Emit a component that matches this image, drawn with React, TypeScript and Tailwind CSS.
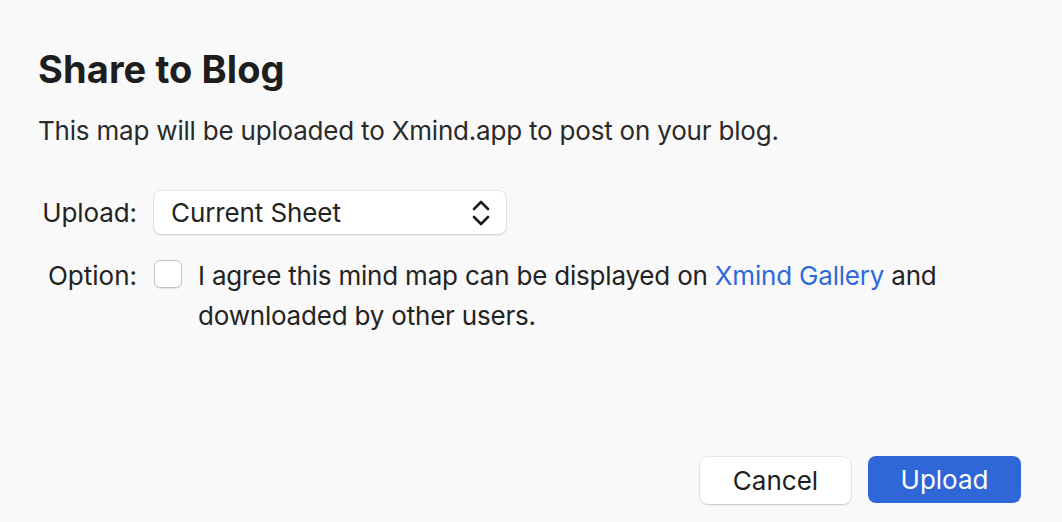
import React from "react";

export default function App() {
  return (
    <div
      className="w-[1062px] h-[522px] bg-[#f9f9f9] text-[#232323] flex flex-col overflow-hidden"
      style={{ fontFamily: "Inter, 'Noto Sans', sans-serif" }}
    >
      <div className="px-[38px] pt-[46px]">
        <h1 className="text-[38px] leading-[46px] font-bold text-[#1e1e1e] tracking-[0.1px]">Share to Blog</h1>
        <p className="mt-[23px] text-[26px] leading-[32px] text-[#2a2a2a] tracking-[-0.2px]">
          This map will be uploaded to Xmind.app to post on your blog.
        </p>
        <div className="mt-[44px] grid grid-cols-[99px_1fr] gap-x-[17px] gap-y-[22px] items-start">
          <div className="text-[26px] leading-[43px] text-right tracking-[-0.1px]">Upload:</div>
          <div className="w-[352px] h-[43px] bg-white rounded-[7px] shadow-[0_0_0_1px_rgba(0,0,0,0.06),0_1px_2px_rgba(0,0,0,0.15)] flex items-center justify-between pl-[17px] pr-[15px]">
            <span className="text-[26px] tracking-[-0.1px]">Current Sheet</span>
            <svg width="20" height="30" viewBox="0 0 20 30" fill="none" stroke="#1a1a1a" strokeWidth="2.6" strokeLinecap="round" strokeLinejoin="round">
              <path d="M3 11 L10 4 L17 11" />
              <path d="M3 19 L10 26 L17 19" />
            </svg>
          </div>
          <div className="text-[26px] leading-[40px] text-right tracking-[0px]">Option:</div>
          <div className="flex items-start gap-[16px]">
            <div className="mt-[4px] w-[28px] h-[28px] shrink-0 bg-white rounded-[6px] border border-[#c4c4c4] shadow-[0_1px_1px_rgba(0,0,0,0.08)]" />
            <p className="text-[26px] leading-[40px] w-[780px] tracking-[-0.2px]">
              I agree this mind map can be displayed on <span className="text-[#2d6ad7]">Xmind Gallery</span> and downloaded by other users.
            </p>
          </div>
        </div>
      </div>
      <div className="mt-auto flex justify-end gap-[17px] pr-[41px] pb-[18px]">
        <button className="w-[151px] h-[47px] bg-white rounded-[8px] text-[26px] text-[#1e1e1e] shadow-[0_0_0_1px_rgba(0,0,0,0.05),0_1px_2px_rgba(0,0,0,0.15)]">
          Cancel
        </button>
        <button className="w-[153px] h-[47px] bg-[#2f67d8] rounded-[8px] text-[26px] text-white -translate-y-[1px]">
          Upload
        </button>
      </div>
    </div>
  );
}
